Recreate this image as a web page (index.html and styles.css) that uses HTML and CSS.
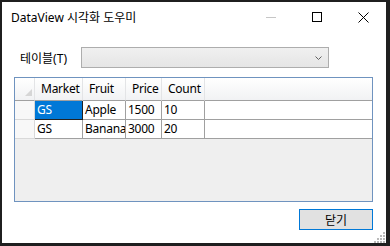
FILE: index.html
```html
<!DOCTYPE html>
<html>
<head>
  <title>DataView 시각화 도우미</title>
  <link rel="stylesheet" href="styles.css">
</head>
<body>
  <div class="window">
    <div class="titlebar">
      <span class="title">DataView 시각화 도우미</span>
      <div class="controls">
        <span class="ctl">
          <svg width="10" height="10" viewBox="0 0 10 10"><path d="M0 5.5h10" stroke="#c6c6c6" fill="none"/></svg>
        </span>
        <span class="ctl">
          <svg width="10" height="10" viewBox="0 0 10 10"><rect x="0.5" y="0.5" width="9" height="9" stroke="#000" fill="none"/></svg>
        </span>
        <span class="ctl">
          <svg width="11" height="11" viewBox="0 0 11 11"><path d="M0.5 0.5l10 10M10.5 0.5l-10 10" stroke="#000" fill="none"/></svg>
        </span>
      </div>
    </div>

    <div class="content">
      <div class="field">
        <label class="field-label">테이블(T)</label>
        <div class="combo">
          <svg width="7" height="4" viewBox="0 0 7 4"><path d="M0.5 0.5l3 3 3-3" stroke="#606060" fill="none"/></svg>
        </div>
      </div>

      <div class="grid">
        <div class="row head">
          <div class="cell corner"><span class="tri"></span></div>
          <div class="cell">Market</div>
          <div class="cell">Fruit</div>
          <div class="cell">Price</div>
          <div class="cell">Count</div>
          <div class="cell fill"></div>
        </div>
        <div class="row">
          <div class="cell rowhead"></div>
          <div class="cell selected">GS</div>
          <div class="cell">Apple</div>
          <div class="cell">1500</div>
          <div class="cell">10</div>
          <div class="cell fill"></div>
        </div>
        <div class="row">
          <div class="cell rowhead"></div>
          <div class="cell">GS</div>
          <div class="cell">Banana</div>
          <div class="cell">3000</div>
          <div class="cell">20</div>
          <div class="cell fill"></div>
        </div>
      </div>

      <div class="actions">
        <button class="btn">닫기</button>
      </div>
    </div>

    <svg class="grip" width="12" height="12" viewBox="0 0 12 12">
      <g fill="#b9b9b9">
        <rect x="10" y="1" width="2" height="2"/>
        <rect x="7" y="4" width="2" height="2"/><rect x="10" y="4" width="2" height="2"/>
        <rect x="4" y="7" width="2" height="2"/><rect x="7" y="7" width="2" height="2"/><rect x="10" y="7" width="2" height="2"/>
        <rect x="1" y="10" width="2" height="2"/><rect x="4" y="10" width="2" height="2"/><rect x="7" y="10" width="2" height="2"/><rect x="10" y="10" width="2" height="2"/>
      </g>
    </svg>
  </div>
</body>
</html>
```

FILE: styles.css
```css
html, body {
  margin: 0;
  padding: 0;
  background: #1f1f1f;
}

body {
  font-family: "Noto Sans", "Noto Sans CJK KR", sans-serif;
  font-size: 12px;
  color: #000;
}

.window {
  position: relative;
  box-sizing: border-box;
  width: 390px;
  height: 246px;
  background: #fff;
  border-style: solid;
  border-color: #1f1f1f;
  border-width: 2px 4px 3px 2px;
}

.titlebar {
  display: flex;
  align-items: center;
  justify-content: space-between;
  height: 30px;
}

.title {
  padding-left: 9px;
  line-height: 16px;
  margin-top: 1px;
}

.controls {
  display: flex;
  height: 30px;
}

.ctl {
  display: flex;
  align-items: center;
  justify-content: center;
  width: 46px;
  height: 30px;
}

.content {
  padding: 15px 13px 0 12px;
}

.field {
  display: flex;
  align-items: center;
  height: 21px;
}

.field-label {
  width: 61px;
  padding-left: 6px;
  margin-top: 3px;
  line-height: 16px;
}

.combo {
  box-sizing: border-box;
  width: 248px;
  height: 21px;
  border: 1px solid #adadad;
  background: linear-gradient(#f0f0f0, #e5e5e5);
  display: flex;
  align-items: center;
  justify-content: flex-end;
  padding-right: 6px;
}

.grid {
  box-sizing: border-box;
  margin-top: 9px;
  height: 125px;
  border: 1px solid #6f93bf;
  background: #efefef;
  letter-spacing: -0.25px;
}

.row {
  display: grid;
  grid-template-columns: 20px 48px 43px 36px 43px 1fr;
  height: 19px;
}

.cell {
  box-sizing: border-box;
  background: #fff;
  border-right: 1px solid #a0a0a0;
  border-bottom: 1px solid #a0a0a0;
  padding-left: 2px;
  line-height: 18px;
  white-space: nowrap;
  overflow: hidden;
}

.cell.fill {
  border-right: none;
}

.row.head {
  height: 23px;
}

.head .cell {
  background: linear-gradient(#ffffff, #f1f2f4);
  border-right-color: #e3e4e6;
  border-bottom-color: #a0a0a0;
  padding-left: 6px;
  line-height: 22px;
}

.head .corner {
  position: relative;
  padding: 0;
}

.tri {
  position: absolute;
  right: 2px;
  bottom: 4px;
  width: 0;
  height: 0;
  border-left: 7px solid transparent;
  border-bottom: 7px solid #d6d6d6;
}

.cell.rowhead {
  background: #f8f8f8;
  border-right-color: #d9d9d9;
  border-bottom-color: #d9d9d9;
}

.cell.selected {
  background: #0078d7;
  color: #fff;
  border-right-color: #222;
  border-bottom-color: #222;
}

.actions {
  display: flex;
  justify-content: flex-end;
  margin-top: 7px;
}

.btn {
  box-sizing: border-box;
  width: 74px;
  height: 21px;
  border: 1px solid #0078d7;
  background: #e1e1e1;
  font-family: inherit;
  font-size: 12px;
  color: #000;
  padding: 0;
}

.grip {
  position: absolute;
  right: 1px;
  bottom: 0;
}
```
